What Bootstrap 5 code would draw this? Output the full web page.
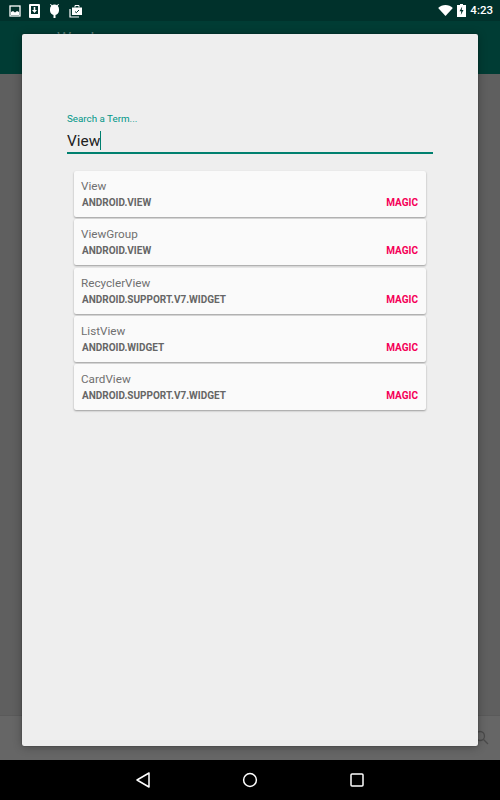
<!DOCTYPE html>
<html lang="en">
  <head>
    <meta charset="UTF-8" />
    <meta name="viewport" content="width=device-width, initial-scale=1.0" />
    <title>Search a Term</title>
    <link
      href="https://cdn.jsdelivr.net/npm/bootstrap@5.3.1/dist/css/bootstrap.min.css"
      rel="stylesheet"
    />
    <style>
      html,
      body {
        height: 800px;
        overflow: hidden;
      }

      body {
        font-family: Roboto, "Liberation Sans", sans-serif;
        background: #000;
      }

      .screen {
        position: relative;
        width: 500px;
        height: 800px;
      }

      .status-bar {
        height: 21px;
        background: #00312b;
        padding: 0 7px 0 9px;
      }

      .status-time {
        font-size: 11.5px;
        font-weight: 500;
        color: #fff;
        line-height: 21px;
      }

      .app-bar {
        height: 53px;
        background: #003c34;
      }

      .app-title {
        position: absolute;
        left: 57px;
        top: 29px;
        font-size: 16px;
        line-height: 20px;
        color: #5f807b;
      }

      .dim-content {
        height: 641px;
        background: #5f5f5f;
      }

      .dim-bottom {
        height: 45px;
        background: #666;
        border-top: 1px solid #5a5a5a;
      }

      .search-peek {
        position: absolute;
        left: 474px;
        top: 730px;
      }

      .nav-bar {
        height: 40px;
        background: #000;
      }

      .nav-slot {
        width: 107px;
      }

      .dialog-panel {
        position: absolute;
        left: 22px;
        top: 34px;
        width: 456px;
        height: 712px;
        background: #eee;
        border-radius: 2px;
        box-shadow: 0 0 1px rgba(0, 0, 0, 0.8), 0 1px 10px rgba(0, 0, 0, 0.3);
        padding: 78px 45px 0;
      }

      .term-label {
        font-size: 9.8px;
        line-height: 13px;
        color: #009688;
      }

      .term-input {
        height: 28px;
        margin-top: 1px;
        border-bottom: 2px solid #00806f;
        padding-top: 5px;
        font-size: 15.4px;
        line-height: 21px;
        color: #212121;
      }

      .term-caret {
        display: inline-block;
        width: 1px;
        height: 19px;
        background: #00806f;
        vertical-align: -4px;
      }

      .result-list {
        margin: 17px 7px 0;
      }

      .result-item {
        height: 46px;
        margin-bottom: 2.3px;
        background: #fafafa;
        border-radius: 2px;
        box-shadow: 0 1px 2px rgba(0, 0, 0, 0.35);
        padding: 8px 8px 0 7px;
      }

      .result-name {
        font-size: 11.7px;
        line-height: 14px;
        color: #707070;
      }

      .result-meta {
        margin-top: 3px;
        padding-left: 1px;
        font-size: 10px;
        line-height: 13px;
        font-weight: 700;
        color: #666;
      }

      .result-action {
        color: #f50057;
      }
    </style>
  </head>

  <body>
    <div class="screen d-flex flex-column">
      <!-- Status bar -->
      <div class="status-bar d-flex align-items-center justify-content-between">
        <div class="d-flex align-items-center gap-2">
          <svg width="12" height="12" viewBox="0 0 12 12">
            <rect x="1" y="1" width="10" height="10" fill="none" stroke="#fff" stroke-width="1.3" />
            <path d="M2 10V7l2-1 2 1.5L8 6l2 1v3z" fill="#fff" />
          </svg>
          <svg width="11" height="14" viewBox="0 0 11 14">
            <path d="M1 0h9a1 1 0 0 1 1 1v12a1 1 0 0 1-1 1H1a1 1 0 0 1-1-1V1a1 1 0 0 1 1-1z" fill="#fff" />
            <rect x="2" y="2" width="7" height="8" fill="#00312b" />
            <path d="M4.7 3h1.6v3H8L5.5 9 3 6h1.7z" fill="#fff" />
          </svg>
          <svg width="13" height="14" viewBox="0 0 13 14">
            <path d="M2 5a4.5 4.5 0 0 1 9 0v1.5a4.5 4.5 0 0 1-9 0z" fill="#fff" />
            <path d="M2.5 0l1.5 2.5M10.5 0L9 2.5" stroke="#fff" stroke-width="1" />
            <rect x="5.5" y="10" width="2" height="4" fill="#fff" />
          </svg>
          <svg width="14" height="14" viewBox="0 0 14 14">
            <path d="M1 5v8h9" fill="none" stroke="#fff" stroke-width="1.2" />
            <path d="M3 3.500h10V11H3z" fill="#fff" />
            <path d="M6 3.500V1.500h4v2" fill="none" stroke="#fff" stroke-width="1" />
            <path d="M6 7.500l1.300 1.200L10 6" fill="none" stroke="#00312b" stroke-width="1" />
          </svg>
        </div>
        <div class="d-flex align-items-center">
          <svg width="15" height="11" viewBox="0 0 16 12">
            <path d="M0 3.200C2 1.300 5 0 8 0s6 1.300 8 3.200L8 12z" fill="#fff" />
          </svg>
          <svg width="9" height="13" viewBox="0 0 9 13" class="ms-1">
            <path d="M3 0h3v1h3v12H0V1h3z" fill="#fff" />
            <path d="M5.200 2.500L2.500 7.300h1.800L3.800 11l2.700-5H4.700z" fill="#00312b" />
          </svg>
          <span class="status-time ms-1">4:23</span>
        </div>
      </div>

      <div class="app-bar"></div>
      <div class="app-title">Word</div>
      <div class="dim-content"></div>
      <div class="dim-bottom"></div>
      <svg class="search-peek" width="16" height="16" viewBox="0 0 16 16">
        <circle cx="6" cy="6" r="4.500" fill="none" stroke="#4a4a4a" stroke-width="1.300" />
        <path d="M9.500 9.500L14 14" stroke="#4a4a4a" stroke-width="1.300" />
      </svg>

      <!-- Navigation bar -->
      <div class="nav-bar d-flex align-items-center justify-content-center">
        <div class="nav-slot d-flex justify-content-center">
          <svg width="16" height="18" viewBox="0 0 16 18">
            <path d="M14 2v14L2 9z" fill="none" stroke="#fff" stroke-width="1.500" stroke-linejoin="round" />
          </svg>
        </div>
        <div class="nav-slot d-flex justify-content-center">
          <svg width="16" height="16" viewBox="0 0 16 16">
            <circle cx="8" cy="8" r="6.400" fill="none" stroke="#fff" stroke-width="1.500" />
          </svg>
        </div>
        <div class="nav-slot d-flex justify-content-center">
          <svg width="14" height="14" viewBox="0 0 14 14">
            <rect x="1" y="1" width="12" height="12" rx="1" fill="none" stroke="#fff" stroke-width="1.500" />
          </svg>
        </div>
      </div>

      <!-- Search dialog -->
      <div class="dialog-panel">
        <div class="term-label">Search a Term...</div>
        <div class="term-input">View<span class="term-caret"></span></div>

        <div class="result-list" id="results"></div>
      </div>
    </div>

    <script>
      const results = [
        { name: 'View', pkg: 'ANDROID.VIEW' },
        { name: 'ViewGroup', pkg: 'ANDROID.VIEW' },
        { name: 'RecyclerView', pkg: 'ANDROID.SUPPORT.V7.WIDGET' },
        { name: 'ListView', pkg: 'ANDROID.WIDGET' },
        { name: 'CardView', pkg: 'ANDROID.SUPPORT.V7.WIDGET' },
      ];

      const list = document.getElementById('results');
      results.forEach((item) => {
        const row = document.createElement('div');
        row.className = 'result-item';
        row.innerHTML = `
          <div class="result-name">${item.name}</div>
          <div class="result-meta d-flex justify-content-between">
            <span>${item.pkg}</span>
            <span class="result-action">MAGIC</span>
          </div>`;
        list.appendChild(row);
      });
    </script>
    <script src="https://cdn.jsdelivr.net/npm/bootstrap@5.3.1/dist/js/bootstrap.bundle.min.js"></script>
  </body>
</html>
